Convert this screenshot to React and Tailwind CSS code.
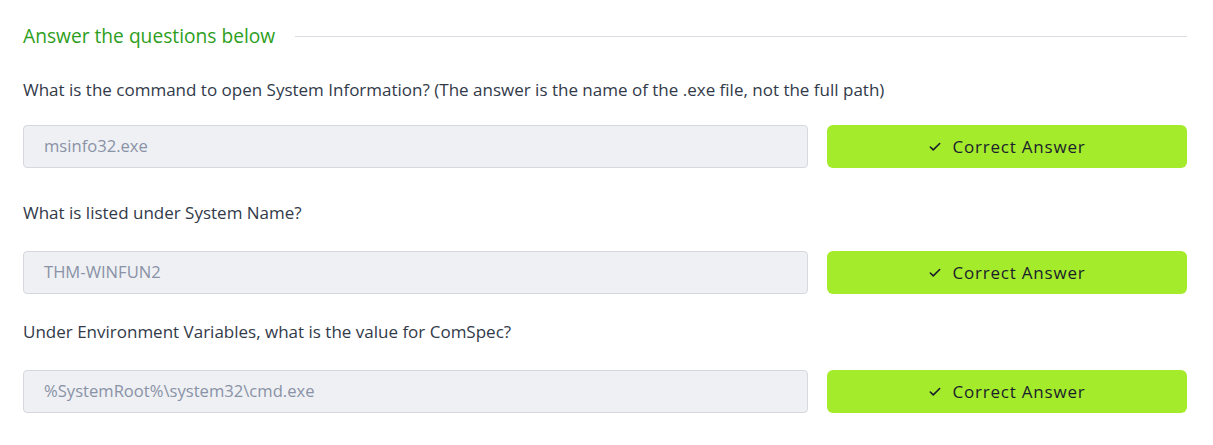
import React from 'react';
import { Check } from 'lucide-react';

const questions = [
  {
    q: 'What is the command to open System Information? (The answer is the name of the .exe file, not the full path)',
    a: 'msinfo32.exe',
    top: 'mt-[28px]',
    mid: 'mt-[23px]',
  },
  { q: 'What is listed under System Name?', a: 'THM-WINFUN2', top: 'mt-[33px]', mid: 'mt-[26px]' },
  {
    q: 'Under Environment Variables, what is the value for ComSpec?',
    a: '%SystemRoot%\\system32\\cmd.exe',
    top: 'mt-[26px]',
    mid: 'mt-[26px]',
  },
];

function AnswerRow({ q, a, top, mid }) {
  return (
    <div className={top}>
      <p className="text-[17px] leading-[24px] text-[#323a4a]">{q}</p>
      <div className={'flex gap-[19px] ' + mid}>
        <div className="flex h-[43px] w-[785px] items-center rounded-[4px] border border-[#d5d8de] bg-[#eef0f4] px-[20px] text-[16.6px] text-[#8a92a6]">
          {a}
        </div>
        <button className="flex h-[43px] w-[360px] items-center justify-center gap-[10px] rounded-[6px] bg-[#a4eb2b] text-[17px] text-[#1b1d2b]">
          <Check className="h-[14px] w-[14px]" strokeWidth={2.75} />
          <span className="tracking-[0.8px]">Correct Answer</span>
        </button>
      </div>
    </div>
  );
}

export default function App() {
  return (
    <div className="h-[445px] w-[1213px] bg-white px-[23px] pt-[22px]" style={{ fontFamily: '"Open Sans", "Noto Sans", sans-serif' }}>
      <div className="flex items-center gap-[20px] pr-[3px]">
        <h3 className="text-[19.2px] leading-[28px] text-[#2d9e20]">Answer the questions below</h3>
        <div className="h-px flex-1 bg-[#dcdbe2]" />
      </div>
      {questions.map((item) => (
        <AnswerRow key={item.a} {...item} />
      ))}
    </div>
  );
}
